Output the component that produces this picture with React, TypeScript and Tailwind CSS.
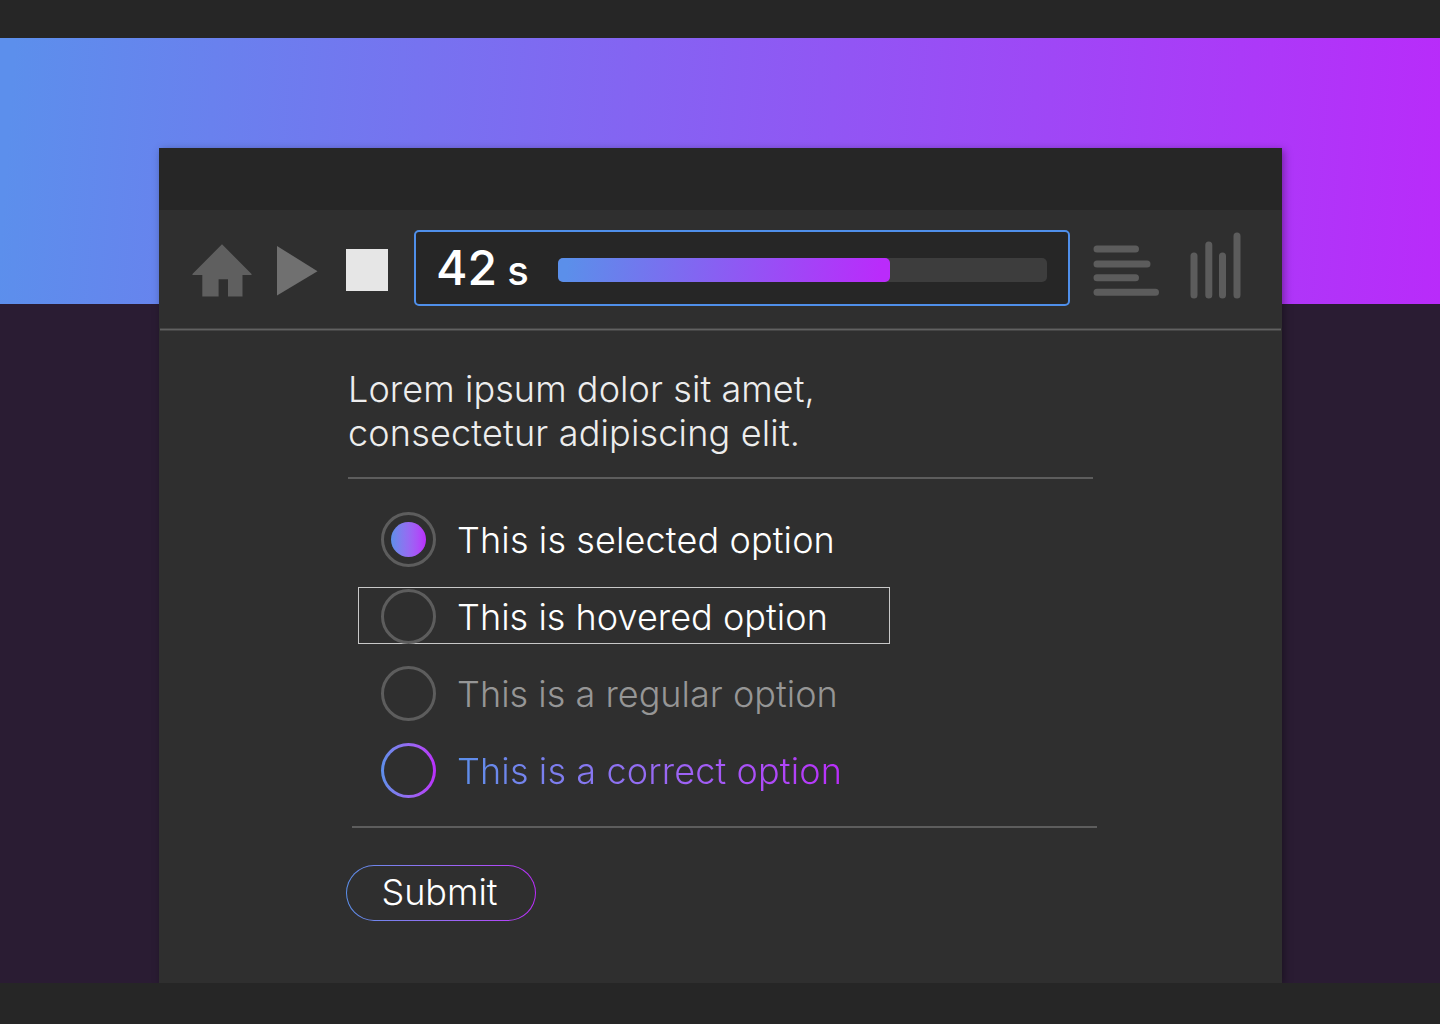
import React from "react";

function HomeIcon() {
  return (
    <svg width="60" height="54" viewBox="0 0 60 54" fill="#5f5f5f">
      <path d="M30 0.3L59.8 30.2L59.2 31H50.5V52.6H36V35.2H26.6V52.6H10.3V31H0.8L0.2 30.2Z" />
    </svg>
  );
}

function PlayIcon() {
  return (
    <svg width="41" height="50" viewBox="0 0 41 50" fill="#707070">
      <path d="M0 0V49.5L40.5 25.2Z" />
    </svg>
  );
}

function LinesIcon() {
  return (
    <svg width="66" height="51" viewBox="0 0 66 51" stroke="#5c5c5c" strokeWidth="7" strokeLinecap="round">
      <path d="M4 4H42.5M4 19H54M4 32.7H42.5M4 47.2H62.5" />
    </svg>
  );
}

function BarsIcon() {
  return (
    <svg width="52" height="68" viewBox="0 0 52 68" stroke="#5c5c5c" strokeWidth="7" strokeLinecap="round">
      <path d="M4 24V63M18.8 13V63M32.5 24V63M47 4V63" />
    </svg>
  );
}

function Option({
  label,
  state,
}: {
  label: string;
  state: "selected" | "hovered" | "regular" | "correct";
}) {
  const ring =
    state === "correct" ? (
      <span className="size-[55px] rounded-full bg-linear-to-r from-[#5b8fea] to-[#ba2bfb] p-[3px]">
        <span className="block size-full rounded-full bg-[#2f2f2f]" />
      </span>
    ) : (
      <span className="flex size-[55px] items-center justify-center rounded-full border-3 border-[#5d5d5d]">
        {state === "selected" && (
          <span className="size-[35px] rounded-full bg-linear-to-r from-[#5b8fea] to-[#ba2bfb]" />
        )}
      </span>
    );
  const text = {
    selected: "tracking-[0.13px] text-white",
    hovered: "tracking-[0.04px] text-white",
    regular: "tracking-[0.02px] text-[#969696]",
    correct:
      "bg-linear-to-r from-[#5b8fea] to-[#ba2bfb] bg-clip-text tracking-[0.13px] text-transparent",
  }[state];
  return (
    <div
      className={
        state === "hovered"
          ? "-mt-px mb-px flex h-[57px] w-[532px] items-start border border-[#c8c8c8] pt-px pl-[22px]"
          : "flex h-[57px] w-[532px] items-start pt-px pl-[23px]"
      }
    >
      {ring}
      <span className={"mt-1.5 ml-[21px] leading-[44px] " + text}>{label}</span>
    </div>
  );
}

export default function App() {
  return (
    <div className="flex h-[1024px] w-[1440px] flex-col overflow-hidden bg-[#262626] font-['Inter',sans-serif]">
      <header className="h-[38px] shrink-0" />
      <main className="h-[945px] overflow-hidden bg-[#2a1c33] bg-[linear-gradient(94deg,#5c8fec_1%,#b92bfa_100%)] bg-[length:100%_266px] bg-no-repeat pt-[110px] pl-[159px]">
        <section className="h-[835px] w-[1123px] bg-[#2f2f2f] shadow-[2px_2px_8px_rgba(0,0,0,0.35)]">
          <div className="h-[62px] bg-[#262626]" />
          <div className="flex h-[118px] items-start pl-[33px]">
            <div className="mt-[34px]"><HomeIcon /></div>
            <div className="mt-9 ml-[25px]"><PlayIcon /></div>
            <div className="mt-[39px] ml-7 size-[42px] bg-[#e6e6e6]" />
            <div className="mt-5 ml-[26px] flex h-[76px] w-[656px] items-center rounded-[5px] border-2 border-[#4f8fea] bg-[#262626] pl-5">
              <div className="w-[122px] text-5xl font-medium whitespace-nowrap text-white">
                42<span className="text-[40px] tracking-[-0.5px]"> s</span>
              </div>
              <div className="mt-1 h-6 w-[489px] rounded-[5px] bg-[#3d3d3d]">
                <div className="h-6 w-[332px] rounded-[5px] bg-[linear-gradient(98deg,#5b8fea_3%,#ba2bfb_97%)]" />
              </div>
            </div>
            <div className="mt-[35px] ml-[23px]"><LinesIcon /></div>
            <div className="mt-[22px] ml-[31px]"><BarsIcon /></div>
          </div>
          <div className="mx-px h-[3px] border-y border-[#454545] bg-[#616161]" />
          <div className="pl-[187px] text-4xl font-light">
            <p className="mt-9 ml-0.5 leading-[44px] text-[#ededed]">
              <span className="tracking-[0.09px]">Lorem ipsum dolor sit amet,</span>
              <br />
              <span className="tracking-[0.18px]">consectetur adipiscing elit.</span>
            </p>
            <div className="mt-[22px] ml-0.5 h-0.5 w-[745px] bg-[#5d5d5d]" />
            <div className="mt-8 ml-3 flex flex-col gap-5">
              <Option label="This is selected option" state="selected" />
              <Option label="This is hovered option" state="hovered" />
              <Option label="This is a regular option" state="regular" />
              <Option label="This is a correct option" state="correct" />
            </div>
            <div className="mt-[27px] ml-1.5 h-0.5 w-[745px] bg-[#5d5d5d]" />
            <button className="mt-[37px] block h-14 w-[190px] rounded-full bg-linear-to-r from-[#5b8fea] to-[#ba2bfb] p-px text-white">
              <span className="flex size-full items-center justify-center rounded-full bg-[#2f2f2f] pr-[3px] pb-0.5">Submit</span>
            </button>
          </div>
        </section>
      </main>
    </div>
  );
}
